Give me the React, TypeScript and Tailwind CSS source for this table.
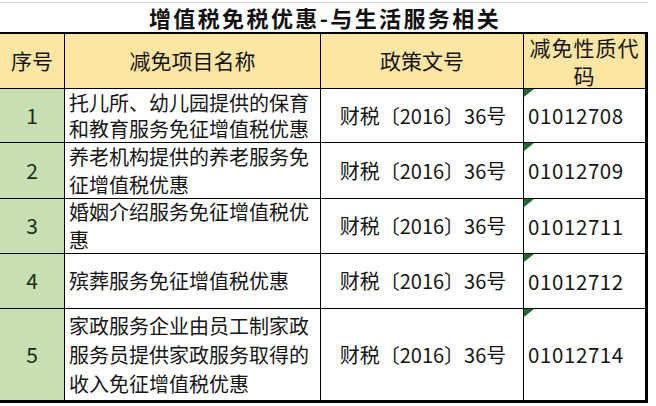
const rows = [
  {
    no: "1",
    name: "托儿所、幼儿园提供的保育和教育服务免征增值税优惠",
    code: "01012708",
    leading: "leading-[26px]",
  },
  {
    no: "2",
    name: "养老机构提供的养老服务免征增值税优惠",
    code: "01012709",
    leading: "leading-[28px]",
  },
  {
    no: "3",
    name: "婚姻介绍服务免征增值税优惠",
    code: "01012711",
    leading: "leading-[28px]",
  },
  {
    no: "4",
    name: "殡葬服务免征增值税优惠",
    code: "01012712",
    leading: "leading-[28px]",
  },
  {
    no: "5",
    name: "家政服务企业由员工制家政服务员提供家政服务取得的收入免征增值税优惠",
    code: "01012714",
    leading: "leading-[29px]",
  },
];

export default function App() {
  return (
    <div className="h-[406px] w-[656px] overflow-hidden bg-white font-['Noto_Sans_CJK_SC',sans-serif] text-[#151515]">
      <div className="w-[648px]">
        <div className="h-[3px] border-b border-[#d6d6d6]" />
        <div className="flex h-[31px] items-center justify-center border-b-2 border-black pl-[2px] text-[22px] font-bold tracking-[2.4px] text-[#111]">
          增值税免税优惠-与生活服务相关
        </div>

        <div className="grid grid-cols-[65px_256px_203px_121px] grid-rows-[55px_54px_56px_55px_55px_91px] border-b-[3px] border-r-[3px] border-black">
          {/* header */}
          <div className="flex items-center justify-center border-b border-r border-black bg-[#fde6a3] text-[21px]">
            序号
          </div>
          <div className="flex items-center justify-center border-b border-r border-black bg-[#fde6a3] text-[21px]">
            减免项目名称
          </div>
          <div className="flex items-center justify-center border-b border-r border-black bg-[#fde6a3] text-[21px]">
            政策文号
          </div>
          <div className="flex items-center justify-center border-b border-black bg-[#fde6a3] px-[3px] text-center text-[21px] leading-[28px] tracking-[1px]">
            减免性质代码
          </div>

          {rows.map((row, i) => {
            const last = i === rows.length - 1;
            const b = last ? "" : "border-b";
            return [
              <div
                key={row.no + "a"}
                className={`flex items-center justify-center border-r border-black bg-[#c8dfb4] text-[21px] text-[#1d2e18] ${b}`}
              >
                {row.no}
              </div>,
              <div
                key={row.no + "b"}
                className={`flex items-center border-r border-black pl-[4px] pr-[6px] text-[20px] ${row.leading} ${b}`}
              >
                <span>{row.name}</span>
              </div>,
              <div
                key={row.no + "c"}
                className={`flex items-center justify-center border-r border-black pl-[2px] text-[20px] ${b}`}
              >
                财税〔2016〕36号
              </div>,
              <div
                key={row.no + "d"}
                className={`relative flex items-center border-black pl-[4px] text-[20.5px] tracking-[0.6px] ${b}`}
              >
                <span className="absolute left-0 top-0 h-0 w-0 border-r-[10px] border-t-[8px] border-r-transparent border-t-[#1f6a2c]" />
                {row.code}
              </div>,
            ];
          })}
        </div>
      </div>
    </div>
  );
}
